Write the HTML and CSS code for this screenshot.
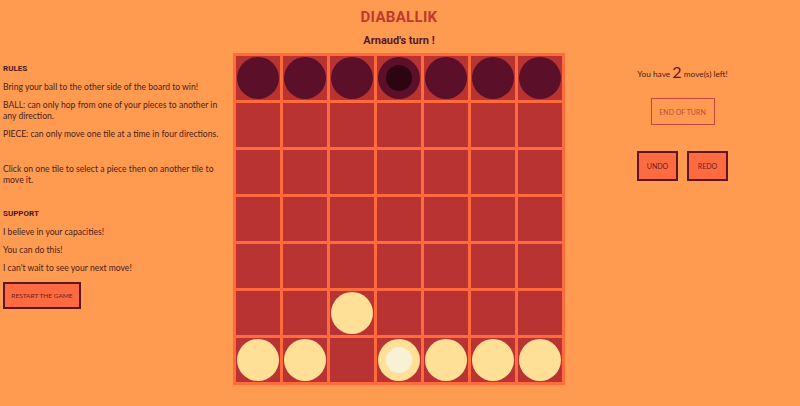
FILE: index.html
```html
<!DOCTYPE html>
<html lang="en">
<head>
    <meta charset="UTF-8">
    <meta name="viewport" content="width=device-width, initial-scale=1.0">
    <title>Diaballik</title>
    <link rel="stylesheet" href="styles.css">
</head>
<body>
    <div class="layout">
        <aside class="rules">
            <h3>RULES</h3>
            <p>Bring your ball to the other side of the board to win!</p>
            <p>BALL: can only hop from one of your pieces to another in any direction.</p>
            <p>PIECE: can only move one tile at a time in four directions.</p>
            <p class="hint">Click on one tile to select a piece then on another tile to move it.</p>
            <h3 class="support-title">SUPPORT</h3>
            <p>I believe in your capacities!</p>
            <p>You can do this!</p>
            <p>I can't wait to see your next move!</p>
            <button class="btn btn-dark restart">RESTART THE GAME</button>
        </aside>

        <main class="game">
            <h1>DIABALLIK</h1>
            <h2>Arnaud's turn !</h2>
            <div class="board">
                <div class="cell"><span class="piece dark"></span></div>
                <div class="cell"><span class="piece dark"></span></div>
                <div class="cell"><span class="piece dark"></span></div>
                <div class="cell"><span class="piece dark"><span class="ball"></span></span></div>
                <div class="cell"><span class="piece dark"></span></div>
                <div class="cell"><span class="piece dark"></span></div>
                <div class="cell"><span class="piece dark"></span></div>

                <div class="cell"></div><div class="cell"></div><div class="cell"></div><div class="cell"></div><div class="cell"></div><div class="cell"></div><div class="cell"></div>
                <div class="cell"></div><div class="cell"></div><div class="cell"></div><div class="cell"></div><div class="cell"></div><div class="cell"></div><div class="cell"></div>
                <div class="cell"></div><div class="cell"></div><div class="cell"></div><div class="cell"></div><div class="cell"></div><div class="cell"></div><div class="cell"></div>
                <div class="cell"></div><div class="cell"></div><div class="cell"></div><div class="cell"></div><div class="cell"></div><div class="cell"></div><div class="cell"></div>

                <div class="cell"></div>
                <div class="cell"></div>
                <div class="cell"><span class="piece light"></span></div>
                <div class="cell"></div>
                <div class="cell"></div>
                <div class="cell"></div>
                <div class="cell"></div>

                <div class="cell"><span class="piece light"></span></div>
                <div class="cell"><span class="piece light"></span></div>
                <div class="cell"></div>
                <div class="cell"><span class="piece light"><span class="ball"></span></span></div>
                <div class="cell"><span class="piece light"></span></div>
                <div class="cell"><span class="piece light"></span></div>
                <div class="cell"><span class="piece light"></span></div>
            </div>
        </main>

        <aside class="controls">
            <p class="moves">You have <span class="count">2</span> move(s) left!</p>
            <button class="btn btn-outline end-turn">END OF TURN</button>
            <div class="history">
                <button class="btn btn-dark">UNDO</button>
                <button class="btn btn-dark">REDO</button>
            </div>
        </aside>
    </div>
</body>
</html>
```

FILE: styles.css
```css
body {
    background-color: #ff9b50;
    font-family: Lato, 'Noto Sans', sans-serif;
    color: #4a1c1c;
    margin: 0;
    padding: 0;
}

.layout {
    display: grid;
    grid-template-columns: 233px 332px 1fr;
    height: 406px;
}

/* left column */
.rules {
    padding: 64px 0 0 3px;
}

.rules h3 {
    font-family: Roboto, sans-serif;
    font-size: 8px;
    font-weight: bold;
    color: #4a1520;
    margin: 0 0 9px;
}

.rules p {
    font-size: 8.6px;
    line-height: 11px;
    margin: 0 0 7px;
    padding-right: 12px;
}

.rules .hint {
    margin-top: 24px;
    margin-bottom: 23px;
}

.rules .support-title {
    margin-bottom: 9px;
}

.btn {
    font-family: Lato, sans-serif;
    font-size: 7px;
    cursor: pointer;
    padding: 0;
}

.btn-dark {
    background-color: #ff6b40;
    border: 2px solid #5e1528;
    color: #6a1a25;
}

.restart {
    width: 78px;
    height: 27px;
    margin-top: 1px;
    font-size: 6.5px;
}

/* center column */
.game {
    display: flex;
    flex-direction: column;
    align-items: center;
}

h1 {
    font-family: Roboto, sans-serif;
    font-size: 15px;
    font-weight: bold;
    color: #c0392e;
    letter-spacing: 0.3px;
    margin: 8px 0 0;
    line-height: 18px;
}

h2 {
    font-family: Roboto, sans-serif;
    font-size: 11px;
    font-weight: bold;
    color: #5a1525;
    margin: 8px 0 0;
    line-height: 14px;
}

.board {
    display: grid;
    grid-template-columns: repeat(7, 44px);
    grid-auto-rows: 44px;
    gap: 3px;
    padding: 3px;
    margin-top: 5px;
    background-color: #ff6b3c;
}

.cell {
    background-color: #b93333;
    display: flex;
    align-items: center;
    justify-content: center;
}

.piece {
    width: 42px;
    height: 42px;
    border-radius: 50%;
    display: flex;
    align-items: center;
    justify-content: center;
}

.piece.dark {
    background-color: #5b0f28;
}

.piece.light {
    background-color: #ffe096;
}

.ball {
    width: 26px;
    height: 26px;
    border-radius: 50%;
}

.dark .ball {
    background-color: #2c0412;
}

.light .ball {
    background-color: #f7f1d6;
}

/* right column */
.controls {
    display: flex;
    flex-direction: column;
    align-items: center;
    padding-top: 64px;
}

.moves {
    font-size: 8.3px;
    margin: 0;
    line-height: 16px;
}

.count {
    font-size: 16px;
    color: #6a1022;
    vertical-align: -1px;
}

.btn-outline {
    background: transparent;
    border: 1.5px solid #c8473a;
    color: #c8473a;
}

.end-turn {
    width: 64px;
    height: 27px;
    margin-top: 16px;
}

.history {
    display: flex;
    gap: 9px;
    margin-top: 26px;
}

.history .btn {
    width: 41px;
    height: 30px;
}
```
